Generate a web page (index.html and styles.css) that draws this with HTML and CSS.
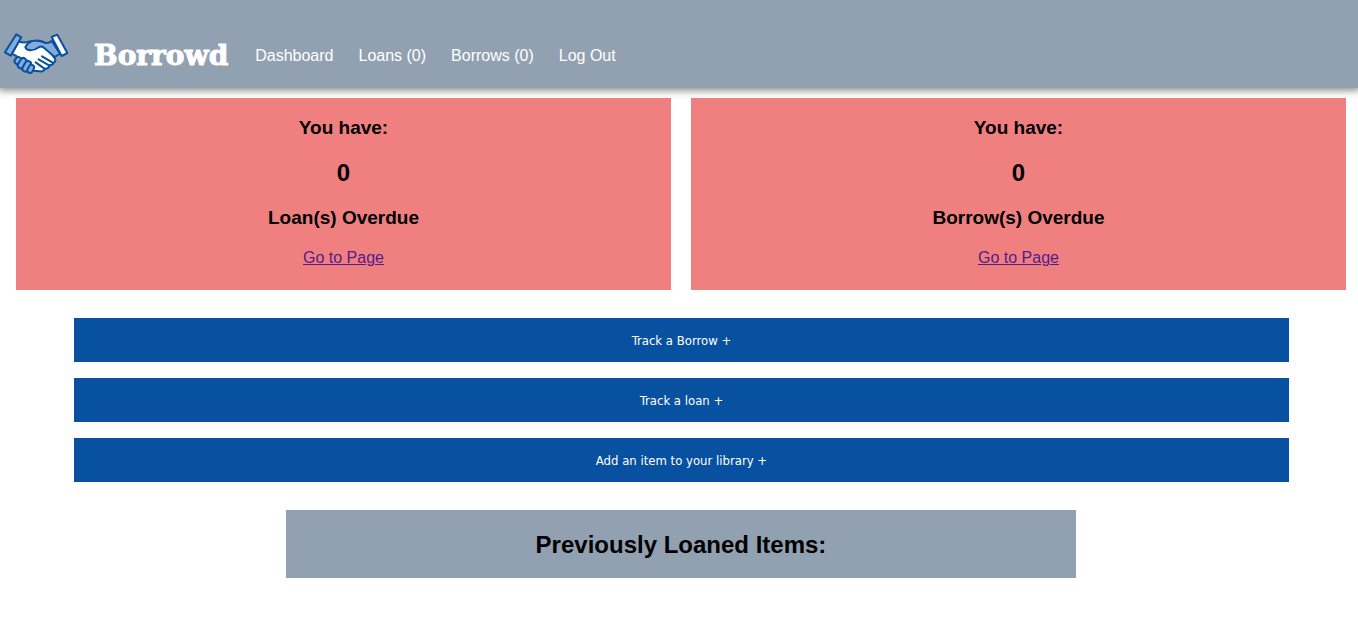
FILE: index.html
```html
<!DOCTYPE html>
<html lang="en">
<head>
<meta charset="utf-8">
<title>Borrowd</title>
<link rel="stylesheet" href="styles.css">
</head>
<body>
<header class="site-header">
  <svg class="logo" viewBox="14 12 195 126" preserveAspectRatio="xMidYMin meet" aria-hidden="true">
    <g stroke="#0850a0" stroke-width="6" stroke-linejoin="round" stroke-linecap="round">
      <path fill="#fff" d="M58 40 Q74 47 91 40 L134 42 L164 88 Q173 98 163 104 Q160 112 151 112 Q147 123 137 122 Q132 133 121 130 L101 128 L54 86 L38 77 Z"/>
      <path fill="#84abdb" d="M78 57 Q90 37 108 38 Q124 37 136 44 Q148 47 157 39 L182 77 L166 87 L132 58 Q126 54 120 57 Q105 68 91 67 Q80 65 78 57 Z"/>
      <path fill="#84abdb" d="M51 19 L66 28 L34 83 L17 73 Z"/>
      <path fill="#fff" d="M157 27 L174 20 L204 75 L187 84 Z"/>
      <path fill="none" d="M128 85 L160 104 M118 94 L149 112 M109 103 L135 122"/>
      <rect fill="#84abdb" x="47" y="87" width="18" height="22" rx="9" transform="rotate(36 56 98)"/>
      <rect fill="#84abdb" x="59" y="89" width="18" height="33" rx="9" transform="rotate(32 68 106)"/>
      <rect fill="#84abdb" x="73" y="98" width="18" height="34" rx="9" transform="rotate(30 82 115)"/>
      <rect fill="#84abdb" x="86" y="110" width="16" height="25" rx="8" transform="rotate(28 94 123)"/>
    </g>
  </svg>
  <span class="brand">Borrowd</span>
  <nav class="nav">
    <a href="#">Dashboard</a>
    <a href="#">Loans (0)</a>
    <a href="#">Borrows (0)</a>
    <a href="#">Log Out</a>
  </nav>
</header>
<main class="page">
  <div class="cards">
    <section class="card">
      <h3>You have:</h3>
      <h2>0</h2>
      <h3>Loan(s) Overdue</h3>
      <a href="#">Go to Page</a>
    </section>
    <section class="card">
      <h3>You have:</h3>
      <h2>0</h2>
      <h3>Borrow(s) Overdue</h3>
      <a href="#">Go to Page</a>
    </section>
  </div>
  <div class="actions">
    <button type="button">Track a Borrow +</button>
    <button type="button">Track a loan +</button>
    <button type="button">Add an item to your library +</button>
  </div>
  <section class="history">
    <h2>Previously Loaned Items:</h2>
  </section>
</main>
</body>
</html>
```
FILE: styles.css
```css
* { box-sizing: border-box; }
body {
  margin: 0;
  background: #fff;
  color: #000;
  font: 16px/18px "Liberation Sans", Arial, sans-serif;
}
h2, h3 { margin: 0; }
h2 { font-size: 24px; line-height: 28px; }
h3 { font-size: 19px; line-height: 22px; }
.site-header {
  display: flex;
  align-items: center;
  gap: 25px;
  padding: 32px 4px 8px;
  background: #92a1b1;
  box-shadow: 0 0 8px 2px rgba(0, 0, 0, 0.5);
}
.logo { width: 65px; height: 48px; }
.brand {
  padding-right: 2px;
  color: #fff;
  font: bold 28px/32px "Rockwell Extra Bold", "DejaVu Serif", serif;
  -webkit-text-stroke: 1px #fff;
}
.nav { display: flex; gap: 25px; }
.nav a { color: #fff; text-decoration: none; }
.page { padding: 10px 12px 57px 16px; }
.cards {
  display: grid;
  grid-template-columns: 1fr 1fr;
  gap: 20px;
}
.card {
  display: flex;
  flex-direction: column;
  align-items: center;
  gap: 20px;
  padding: 19px 20px 23px;
  background: #f08080;
}
.card a { color: #551a8b; }
.actions {
  display: grid;
  gap: 16px;
  margin: 28px 57px 28px 58px;
}
.actions button {
  height: 44px;
  padding: 1px 16px 0;
  border: 0;
  background: #0850a0;
  color: #fff;
  font: 13px/16px "DejaVu Sans Condensed", "Noto Sans", sans-serif;
}
.history {
  width: 59.4%;
  margin: 0 auto;
  padding: 21px 20px 19px;
  background: #92a1b1;
  text-align: center;
}
```
